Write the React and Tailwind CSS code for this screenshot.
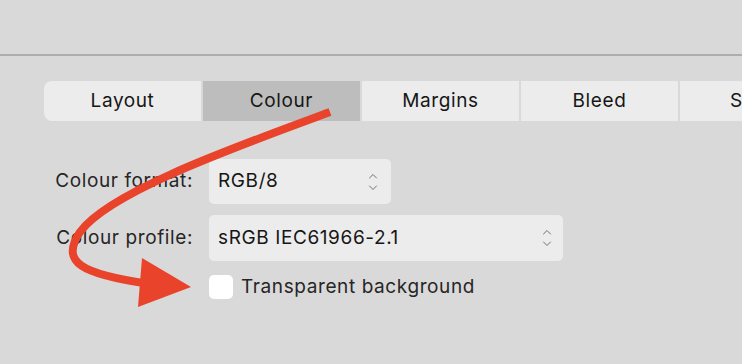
import React from "react";

function Chevrons() {
  return (
    <svg width="10" height="20" viewBox="0 0 10 20" fill="none" stroke="#707070" strokeWidth="1" strokeLinecap="round" strokeLinejoin="round">
      <path d="M1.5 6 L5 2.5 L8.5 6" />
      <path d="M1.5 14 L5 17.5 L8.5 14" />
    </svg>
  );
}

export default function App() {
  const tabs = ["Layout", "Colour", "Margins", "Bleed", "Slices"];
  return (
    <div
      className="relative w-[742px] h-[364px] overflow-hidden bg-[#d9d9d9] text-[#222] tracking-[0.6px]"
      style={{ fontFamily: 'Inter, "Liberation Sans", sans-serif' }}
    >
      <div className="h-[54px]" />
      <div className="h-[2px] bg-[#adadad]" />
      <div className="pt-[25px] pl-[44px] flex gap-[2px] whitespace-nowrap">
        {tabs.map((t, i) => (
          <div
            key={t}
            className={
              "shrink-0 w-[157px] h-[40px] flex items-center justify-center text-[19px] text-[#161616] " +
              (i === 1 ? "bg-[#bdbdbd]" : "bg-[#ececec]") +
              (i === 0 ? " rounded-l-[8px]" : "")
            }
          >
            {t}
          </div>
        ))}
      </div>
      <div className="pt-[38px] pl-[44px] grid grid-cols-[149px_auto] gap-x-4 items-center">
        <div className="text-right text-[19px] text-[#262626] h-[45px] flex items-center justify-end">Colour format:</div>
        <div className="w-[182px] h-[45px] rounded-[5px] bg-[#ececec] flex items-center justify-between pl-[9px] pr-[13px] text-[19px] text-[#161616]">
          <span>RGB/8</span>
          <Chevrons />
        </div>
        <div className="mt-[11px] text-right text-[19px] text-[#262626] h-[46px] flex items-center justify-end">Colour profile:</div>
        <div className="mt-[11px] w-[354px] h-[46px] rounded-[5px] bg-[#ececec] flex items-center justify-between pl-[9px] pr-[11px] text-[19px] text-[#161616]">
          <span>sRGB IEC61966-2.1</span>
          <Chevrons />
        </div>
        <div />
        <div className="mt-[12px] flex items-center gap-[8px]">
          <div className="w-[24px] h-[24px] rounded-[5px] bg-white" />
          <span className="text-[19px] text-[#262626]">Transparent background</span>
        </div>
      </div>
      <svg className="absolute inset-0 pointer-events-none" width="742" height="364" viewBox="0 0 742 364">
        <path
          d="M330 112 C 250 142 110 190 80 232 C 60 262 80 274 150 284"
          fill="none"
          stroke="#e9432b"
          strokeWidth="8"
        />
        <polygon points="142,258 191,287 138,307" fill="#e9432b" />
      </svg>
    </div>
  );
}
